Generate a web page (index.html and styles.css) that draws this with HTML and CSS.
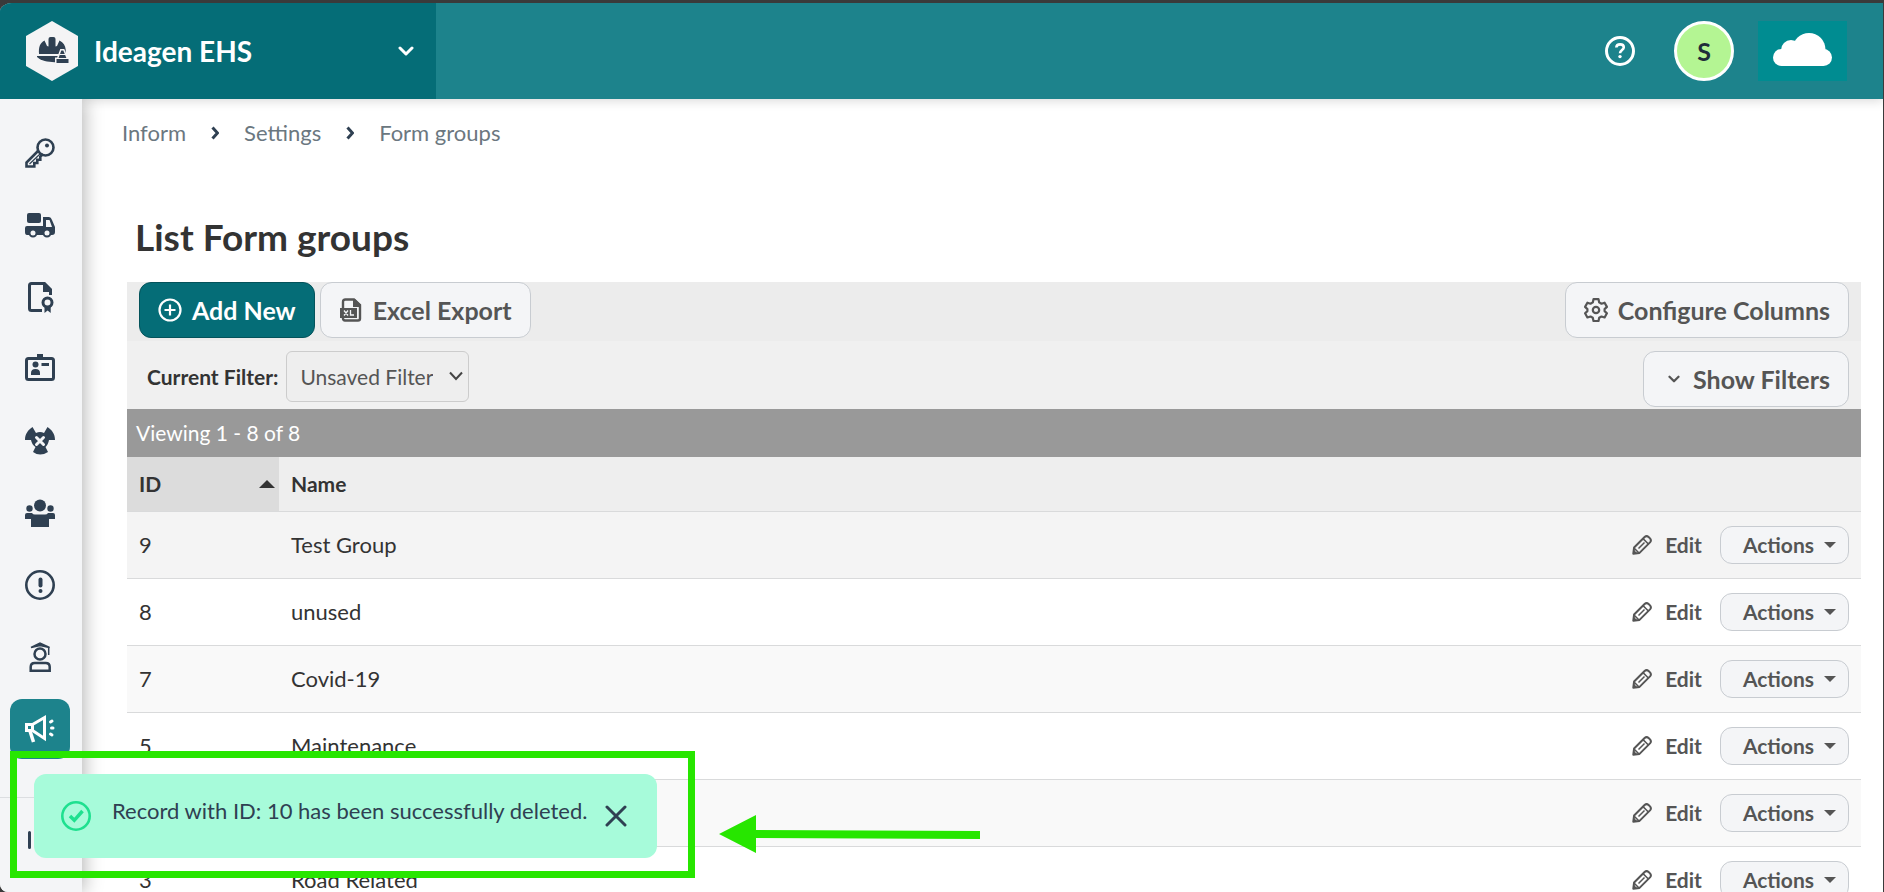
FILE: index.html
```html
<!DOCTYPE html>
<html lang="en">
<head>
    <meta charset="UTF-8">
    <meta name="viewport" content="width=device-width, initial-scale=1.0">
    <title>List Form groups</title>
    <link rel="stylesheet" href="styles.css">
</head>
<body>
    <!-- shared icons -->
    <svg class="sprite" aria-hidden="true">
        <symbol id="pencil" viewBox="0 0 20 20">
            <path d="M1.3 18.700l.8-6.200L12.600 2a3 3 0 0 1 4 0l1.400 1.400a3 3 0 0 1 0 4L7.500 17.900z" fill="none" stroke="currentColor" stroke-width="2" stroke-linejoin="round"/>
            <path d="M11 3.600l5.400 5.400M6.500 13.500l6-6M2 13l5 5" fill="none" stroke="currentColor" stroke-width="1.500"/>
            <path d="M1 19l.6-4.500 3.900 3.900z" fill="currentColor"/>
        </symbol>
        <symbol id="chevron" viewBox="0 0 16 10">
            <path d="M2 2l6 6 6-6" fill="none" stroke="currentColor" stroke-width="3" stroke-linecap="round" stroke-linejoin="round"/>
        </symbol>
        <symbol id="crumb-arrow" viewBox="0 0 8 14">
            <path d="M1.500 1.500L6.500 7l-5 5.500" fill="none" stroke="currentColor" stroke-width="3"/>
        </symbol>
    </svg>

    <div class="app">
        <header class="header">
            <button class="brand" type="button">
                <svg class="brand-logo" viewBox="0 0 52 60">
                    <path d="M26 0l26 15v30L26 60 0 45V15z" fill="#f4f4f5"/>
                    <path d="M13 33c-.5-7 1-11 5.500-13.500L21 25l1.500.5V18q0-2 2-2h3q2 0 2 2v7.500L31 25l2.500-5.500c4 2 5.800 5 6.200 9V33z" fill="#2f4052"/>
                    <path d="M11 35h22v6c-9 .6-17-.5-22-5z" fill="#2f4052"/>
                    <path d="M35.300 29.500h2l3.500 8.500h1.700v4H30.500v-4h1.700z" fill="#2f4052" stroke="#f4f4f5" stroke-width="3" paint-order="stroke"/>
                    <path d="M33.500 33.500h6M32 37.500h9" stroke="#f4f4f5" stroke-width="1.200"/>
                </svg>
                <span class="brand-name">Ideagen EHS</span>
                <svg class="brand-chevron"><use href="#chevron"/></svg>
            </button>
            <div class="header-tools">
                <button class="icon-btn" type="button" aria-label="Help">
                    <svg class="icon" viewBox="0 0 30 30" fill="none" stroke="#fff" stroke-width="3">
                        <circle cx="15" cy="15" r="13.500"/>
                        <path d="M11.300 11.500c.3-4.300 7.500-4 7.500-.2 0 2.700-3.800 2.700-3.800 6" stroke-width="2.600"/>
                        <circle cx="15" cy="20.600" r="1.700" fill="#fff" stroke="none"/>
                    </svg>
                </button>
                <button class="avatar" type="button">S</button>
                <div class="company">
                    <svg viewBox="0 0 59 33" fill="#fff">
                        <circle cx="8.500" cy="24.500" r="8.500"/>
                        <circle cx="18" cy="17" r="10"/>
                        <circle cx="36" cy="16.500" r="16.500"/>
                        <circle cx="50.500" cy="24.500" r="8.500"/>
                        <path d="M8.500 17h42v16h-42z"/>
                    </svg>
                </div>
            </div>
        </header>

        <div class="body">
            <nav class="sidebar">
                <a class="nav-item" href="#" aria-label="Permits">
                    <svg class="icon" viewBox="0 0 30 30" fill="none" stroke="currentColor" stroke-width="2.600">
                        <path d="M13.500 12.500L1.500 24.500v4h7.800v-3.500h3v-3.300h3v-3.200l2.700-2.500"/>
                        <circle cx="20.500" cy="9.500" r="8"/>
                        <path d="M4.500 26L15 16" stroke-width="1.200"/>
                        <circle cx="22" cy="7.500" r="2" fill="currentColor" stroke="none"/>
                    </svg>
                </a>
                <a class="nav-item" href="#" aria-label="Assets">
                    <svg class="icon" viewBox="0 0 30 30" fill="currentColor">
                        <rect x="2" y="3" width="14" height="10" rx="2"/>
                        <path fill-rule="evenodd" d="M18 7h6q2 0 3 3l3 7v5q0 3-3 3H2q-2 0-2-3v-4q0-2 2-2h16zm3 3v7h6l-2.500-7z"/>
                        <circle cx="8" cy="23" r="3.500" fill="#f4f5f7" stroke="currentColor" stroke-width="2"/>
                        <circle cx="22" cy="23" r="3.500" fill="#f4f5f7" stroke="currentColor" stroke-width="2"/>
                    </svg>
                </a>
                <a class="nav-item" href="#" aria-label="Certificates">
                    <svg class="icon" viewBox="0 0 30 30">
                        <path d="M17 28.500H6.500q-2 0-2-2v-23q0-2 2-2H19l6.500 6.500v5" fill="none" stroke="currentColor" stroke-width="3"/>
                        <path d="M18 0h2l7 7v3h-9z" fill="currentColor"/>
                        <circle cx="22.500" cy="20.500" r="4.500" fill="none" stroke="currentColor" stroke-width="3"/>
                        <path d="M19.500 24.500h6.200V31l-3.100-2.500-3.100 2.500z" fill="currentColor"/>
                    </svg>
                </a>
                <a class="nav-item" href="#" aria-label="Contractors">
                    <svg class="icon" viewBox="0 0 30 30" fill="currentColor">
                        <rect x="1.500" y="4.500" width="27" height="21" rx="2" fill="none" stroke="currentColor" stroke-width="3"/>
                        <path d="M12 0h6v4h-6zM16.500 9H24v3h-7.500zM6 21v-2q0-4 4.500-4t4.500 4v2z"/>
                        <circle cx="10.500" cy="10.500" r="3"/>
                    </svg>
                </a>
                <a class="nav-item" href="#" aria-label="Hazards">
                    <svg class="icon" viewBox="0 0 30 30" fill="currentColor">
                        <path d="M0 14C0 8 3 4 7.500 1l3.500 6q4-2 8 0l3.500-6c4.500 3 7.500 7 7.500 13h-6q-1 5-3.500 7l2.500 5q-8 5-15 0l2.500-5Q7 19 6 14z"/>
                        <path d="M11.500 11.500l7 7M18.500 11.500l-7 7" stroke="#f4f5f7" stroke-width="3" stroke-linecap="round"/>
                    </svg>
                </a>
                <a class="nav-item" href="#" aria-label="People">
                    <svg class="icon" viewBox="0 0 30 30" fill="currentColor">
                        <circle cx="15" cy="7.500" r="6"/>
                        <circle cx="4.500" cy="10.500" r="3.200"/>
                        <circle cx="25.500" cy="10.500" r="3.200"/>
                        <path d="M0 21v-4q0-2 2-2h5q1 1.500 3 1.500h10q2 0 3-1.500h5q2 0 2 2v4h-6v8H6v-8z"/>
                    </svg>
                </a>
                <a class="nav-item" href="#" aria-label="Incidents">
                    <svg class="icon" viewBox="0 0 30 30" fill="none" stroke="currentColor">
                        <circle cx="15" cy="15" r="13.700" stroke-width="2.600"/>
                        <path d="M15.500 9.500v6" stroke-width="4" stroke-linecap="round"/>
                        <circle cx="15.500" cy="21" r="2" fill="currentColor" stroke="none"/>
                    </svg>
                </a>
                <a class="nav-item" href="#" aria-label="Training">
                    <svg class="icon" viewBox="0 0 30 30" fill="none" stroke="currentColor" stroke-width="2.500">
                        <path d="M6 5.500L15 1l9.500 4.500L15 3.500z" fill="currentColor" stroke-width="1.500"/>
                        <path d="M23.700 5v8" stroke-width="1.500"/>
                        <circle cx="15" cy="12" r="5.500"/>
                        <path d="M5.700 28.700V25q0-4 4-4h11q4 0 4 4v3.700z"/>
                    </svg>
                </a>
                <a class="nav-item active" href="#" aria-label="Inform">
                    <svg class="icon" viewBox="0 0 30 30" fill="none" stroke="currentColor" stroke-width="3">
                        <path d="M1.500 10.500h6v6h-6zM7.500 10.500l12-7v21l-12-8"/>
                        <path d="M5 17l3.500 11" stroke-width="3.500"/>
                        <path d="M25.500 8l1.500-1M26.500 14h1.500M25.500 20l1.500 1" stroke-linecap="round"/>
                    </svg>
                </a>
                <div class="nav-footer">
                    <button class="icon-btn" type="button" aria-label="Expand menu">
                        <svg class="icon" viewBox="0 0 30 30" fill="none" stroke="currentColor" stroke-width="3" stroke-linecap="round">
                            <path d="M4.500 7.500v15M11 15h13M19 10l5 5-5 5"/>
                        </svg>
                    </button>
                </div>
            </nav>

            <main class="content">
                <nav class="breadcrumb">
                    <a href="#">Inform</a>
                    <svg><use href="#crumb-arrow"/></svg>
                    <a href="#">Settings</a>
                    <svg><use href="#crumb-arrow"/></svg>
                    <a href="#">Form groups</a>
                </nav>

                <h1>List Form groups</h1>

                <section class="panel">
                    <div class="toolbar">
                        <button class="btn primary" type="button">
                            <svg viewBox="0 0 24 24" fill="none" stroke="currentColor" stroke-width="2.200">
                                <circle cx="12" cy="12" r="10.500"/>
                                <path d="M12 6.500v11M6.500 12h11"/>
                            </svg>
                            Add New
                        </button>
                        <button class="btn" type="button">
                            <svg viewBox="0 0 24 24">
                                <path d="M4 10V4q0-2.500 2.500-2.500H15L21 7v13.500q0 2-2 2H6q-2 0-2-2V19" fill="none" stroke="currentColor" stroke-width="2.400"/>
                                <path d="M14 1h2l6 6v2h-8zM1 10h17v10H1z" fill="currentColor"/>
                                <path d="M5 12.500l4 5M9 12.500l-4 5M11.500 12v5H15" fill="none" stroke="#f4f5f7" stroke-width="1.300"/>
                            </svg>
                            Excel Export
                        </button>
                        <button class="btn push" type="button">
                            <svg viewBox="0 0 24 24" fill="none" stroke="currentColor" stroke-width="2.200" stroke-linejoin="round">
                                <path d="M9.500 1.200h5l.7 3.200 2.300 1.300 3.100-1 2.300 4.200-2.300 2.200v2l2.300 2.200-2.300 4.200-3.100-1-2.300 1.300-.7 3.200h-5l-.7-3.200-2.300-1.300-3.100 1-2.300-4.200 2.300-2.200v-2L1.100 8.900l2.300-4.200 3.100 1 2.300-1.300z"/>
                                <circle cx="12" cy="12" r="3.200"/>
                            </svg>
                            Configure Columns
                        </button>
                    </div>

                    <div class="filters">
                        <label for="filter">Current Filter:</label>
                        <div class="select-wrap">
                            <select id="filter">
                                <option>Unsaved Filter</option>
                            </select>
                            <svg viewBox="0 0 16 10"><path d="M2 1.500l6 6.500 6-6.500" fill="none" stroke="#444" stroke-width="2"/></svg>
                        </div>
                        <button class="btn push toggle" type="button">
                            <svg><use href="#chevron"/></svg>
                            Show Filters
                        </button>
                    </div>

                    <div class="viewing">Viewing 1 - 8 of 8</div>

                    <table class="grid">
                        <thead>
                            <tr>
                                <th class="col-id"><span class="sort">ID <i class="arrow-up"></i></span></th>
                                <th>Name</th>
                                <th></th>
                            </tr>
                        </thead>
                        <tbody>
                            <tr class="first">
                                <td>9</td>
                                <td>Test Group</td>
                                <td><div class="row-tools"><a class="edit" href="#"><svg><use href="#pencil"/></svg>Edit</a><button class="actions" type="button">Actions <i class="arrow-down"></i></button></div></td>
                            </tr>
                            <tr>
                                <td>8</td>
                                <td>unused</td>
                                <td><div class="row-tools"><a class="edit" href="#"><svg><use href="#pencil"/></svg>Edit</a><button class="actions" type="button">Actions <i class="arrow-down"></i></button></div></td>
                            </tr>
                            <tr>
                                <td>7</td>
                                <td>Covid-19</td>
                                <td><div class="row-tools"><a class="edit" href="#"><svg><use href="#pencil"/></svg>Edit</a><button class="actions" type="button">Actions <i class="arrow-down"></i></button></div></td>
                            </tr>
                            <tr>
                                <td>5</td>
                                <td>Maintenance</td>
                                <td><div class="row-tools"><a class="edit" href="#"><svg><use href="#pencil"/></svg>Edit</a><button class="actions" type="button">Actions <i class="arrow-down"></i></button></div></td>
                            </tr>
                            <tr>
                                <td></td>
                                <td></td>
                                <td><div class="row-tools"><a class="edit" href="#"><svg><use href="#pencil"/></svg>Edit</a><button class="actions" type="button">Actions <i class="arrow-down"></i></button></div></td>
                            </tr>
                            <tr>
                                <td>3</td>
                                <td>Road Related</td>
                                <td><div class="row-tools"><a class="edit" href="#"><svg><use href="#pencil"/></svg>Edit</a><button class="actions" type="button">Actions <i class="arrow-down"></i></button></div></td>
                            </tr>
                        </tbody>
                    </table>
                </section>
            </main>
        </div>
    </div>

    <div class="toast" role="status">
        <svg class="icon" viewBox="0 0 30 30" fill="none" stroke="#1ee08f">
            <circle cx="15" cy="15" r="13.700" stroke-width="2.600"/>
            <path d="M9 15l4.300 4.300L21.500 10" stroke-width="3.500"/>
        </svg>
        <span class="toast-text">Record with ID: 10 has been successfully deleted.</span>
        <button class="icon-btn" type="button" aria-label="Close">
            <svg class="close" viewBox="0 0 22 22"><path d="M2 2l18 18M20 2L2 20" stroke="#2f4052" stroke-width="3" stroke-linecap="round"/></svg>
        </button>
    </div>

    <!-- callout -->
    <div class="callout-box"></div>
    <svg class="callout-arrow" viewBox="0 0 261 38">
        <path d="M0 19L37 0v15l224 1v8l-224-1v15z" fill="#27e600"/>
    </svg>
</body>
</html>
```

FILE: styles.css
```css
*, *::before, *::after {
    box-sizing: border-box;
}
body {
    margin: 0;
    background: #3a3a3a;
    color: #333;
    font-family: Lato, "Liberation Sans", sans-serif;
    font-size: 21px;
    line-height: 26px;
    overflow: hidden;
}
a {
    color: inherit;
    text-decoration: none;
}
button {
    font: inherit;
    color: inherit;
    cursor: pointer;
}
svg {
    display: block;
    flex: none;
}
.sprite {
    display: none;
}
.icon {
    width: 30px;
    height: 30px;
    overflow: visible;
}
.icon-btn {
    padding: 0;
    border: none;
    background: none;
}
.app {
    display: flex;
    flex-direction: column;
    height: 100vh;
    border-top: 3px solid #3a3a3a;
    border-right: 1px solid #3a3a3a;
    border-radius: 12px 0 0 8px;
    overflow: hidden;
    background: #fff;
}

/*--------- HEADER -------------*/
.header {
    position: relative;
    z-index: 2;
    flex: none;
    display: flex;
    justify-content: space-between;
    height: 96px;
    background: #1d838c;
    box-shadow: 0 2px 10px rgba(0, 0, 0, 0.15);
}
.brand {
    display: flex;
    align-items: center;
    width: 436px;
    padding: 0 22px 0 26px;
    border: none;
    background: #056d77;
    color: #fff;
}
.brand-logo {
    width: 52px;
    height: 60px;
}
.brand-name {
    margin-left: 16px;
    font-size: 28px;
    font-weight: 700;
}
.brand-chevron {
    width: 16px;
    height: 10px;
    margin-left: auto;
}
.header-tools {
    display: flex;
    align-items: center;
    padding-right: 36px;
}
.avatar {
    width: 60px;
    height: 60px;
    margin: 0 24px 0 39px;
    border: 3px solid #fff;
    border-radius: 50%;
    background: #b4f593;
    color: #1f2d3a;
    font-size: 25px;
    font-weight: 700;
}
.company {
    display: flex;
    padding: 12px 15px 15px;
    background: #008c91;
}
.company svg {
    width: 59px;
    height: 33px;
}

/*--------- SIDEBAR -------------*/
.body {
    flex: 1;
    display: flex;
    min-height: 0;
}
.sidebar {
    position: relative;
    z-index: 3;
    flex: none;
    display: flex;
    flex-direction: column;
    align-items: center;
    gap: 12px;
    width: 82px;
    padding: 24px 2px 0 0;
    background: #f4f5f7;
    color: #2f4052;
    box-shadow: 2px 0 18px rgba(0, 0, 0, 0.3);
    clip-path: inset(0 -24px 0 0);
}
.nav-item {
    flex: none;
    display: flex;
    align-items: center;
    justify-content: center;
    width: 60px;
    height: 60px;
    border-radius: 12px;
}
.nav-item.active {
    background: #1d838c;
    color: #fff;
}
.nav-footer {
    align-self: stretch;
    margin-top: 26px;
    padding: 27px 0 0 25px;
    border-top: 1px solid #dcdee1;
}

/*--------- CONTENT -------------*/
.content {
    flex: 1;
    padding: 21px 22px 0 45px;
}
.breadcrumb {
    display: flex;
    align-items: center;
    gap: 25px;
    margin-left: -5px;
    color: #6b7780;
    font-size: 22px;
}
.breadcrumb svg {
    width: 8px;
    height: 14px;
    color: #2f4052;
}
h1 {
    margin: 68px 0 22px 8px;
    font-size: 37px;
    line-height: 46px;
}
.toolbar {
    display: flex;
    gap: 5px;
    padding: 0 12px 3px;
    background: #ececec;
}
.btn {
    display: flex;
    align-items: center;
    gap: 10px;
    height: 56px;
    padding: 0 18px;
    border: 1px solid #c8ccd1;
    border-radius: 12px;
    background: #f4f5f7;
    color: #555;
    font-size: 25px;
    font-weight: 700;
}
.btn svg {
    width: 24px;
    height: 24px;
}
.btn.primary {
    border-color: #04535b;
    background: #056d77;
    color: #fff;
}
.btn.push {
    margin-left: auto;
}
.btn.toggle {
    gap: 13px;
    padding-left: 24px;
}
.btn.toggle svg {
    width: 12px;
    height: 8px;
}
.filters {
    display: flex;
    align-items: flex-start;
    padding: 10px 12px 2px 20px;
    background: #f0f0f0;
}
.filters label {
    margin-right: 8px;
    line-height: 51px;
    font-weight: 700;
}
.select-wrap {
    position: relative;
}
.select-wrap select {
    appearance: none;
    height: 51px;
    padding: 0 35px 0 13px;
    border: 1px solid #ccc;
    border-radius: 6px;
    background: #eee;
    color: #555;
    font: inherit;
}
.select-wrap svg {
    position: absolute;
    top: 20px;
    right: 5px;
    width: 16px;
    height: 10px;
    pointer-events: none;
}
.viewing {
    padding: 11px 9px;
    background: #999;
    color: #fff;
}

/*--------- TABLE -------------*/
.grid {
    width: 100%;
    border-collapse: separate;
    border-spacing: 0;
}
.grid th,
.grid td {
    padding: 0 12px;
    border-bottom: 1px solid #d9dadb;
    text-align: left;
}
.grid th {
    height: 55px;
    background: #eee;
}
.grid .col-id {
    width: 152px;
    padding-right: 4px;
    background: #dcdcdc;
}
.grid td {
    height: 67px;
    background: #fff;
    font-size: 22px;
}
.grid tr:nth-child(odd) td {
    background: #f9f9f9;
}
.grid tr.first td {
    background: #f4f4f4;
}
.sort {
    display: flex;
    align-items: center;
    justify-content: space-between;
}
.arrow-up,
.arrow-down {
    border: 8px solid transparent;
    border-top-width: 0;
    border-bottom: 8px solid #333;
}
.arrow-down {
    border-width: 6px 6px 0;
    border-top-color: #555;
}
.row-tools {
    display: flex;
    align-items: center;
    justify-content: flex-end;
    gap: 18px;
    color: #555;
    font-size: 21px;
    font-weight: 700;
}
.edit {
    display: flex;
    align-items: center;
    gap: 13px;
}
.edit svg {
    width: 20px;
    height: 20px;
}
.actions {
    display: flex;
    align-items: center;
    gap: 10px;
    height: 38px;
    padding: 0 12px 0 22px;
    border: 1px solid #c8ccd1;
    border-radius: 12px;
    background: #f4f5f7;
}

/*--------- TOAST -------------*/
.toast {
    position: fixed;
    z-index: 3;
    left: 34px;
    bottom: 34px;
    display: flex;
    align-items: center;
    height: 84px;
    padding: 0 30px 0 27px;
    border-radius: 12px;
    background: #a7fbda;
    color: #2f4052;
    font-size: 22px;
}
.toast-text {
    margin: 0 18px 10px 21px;
}
.close {
    width: 22px;
    height: 22px;
}

/*--------- CALLOUT -------------*/
.callout-box {
    position: fixed;
    z-index: 4;
    left: 10px;
    bottom: 14px;
    width: 685px;
    height: 127px;
    border: 7px solid #27e600;
    pointer-events: none;
}
.callout-arrow {
    position: fixed;
    z-index: 4;
    left: 719px;
    bottom: 39px;
    width: 261px;
    height: 38px;
}
```
